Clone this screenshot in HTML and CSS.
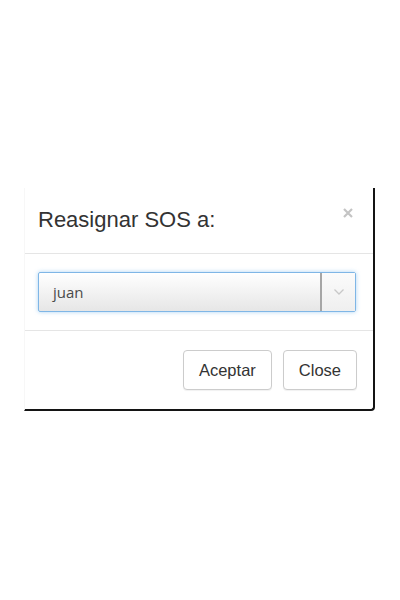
FILE: index.html
```html
<!DOCTYPE html>
<html lang="es">
<head>
<meta charset="utf-8">
<title>Reasignar SOS</title>
<link rel="stylesheet" href="styles.css">
</head>
<body>
<div class="modal">
  <div class="modal-header">
    <h4 class="modal-title">Reasignar SOS a:</h4>
    <button class="close" type="button" aria-label="Close">
      <svg width="10" height="10" viewBox="0 0 10 10"><path d="M1 1 L9 9 M9 1 L1 9" stroke="#c4c4c4" stroke-width="2.2" fill="none"/></svg>
    </button>
  </div>
  <div class="modal-body">
    <div class="select">
      <span class="select-value">juan</span>
      <span class="select-arrow">
        <svg width="12" height="8" viewBox="0 0 12 8"><path d="M1.5 1.5 L6 6 L10.5 1.5" stroke="#c8c8c8" stroke-width="1.3" fill="none"/></svg>
      </span>
    </div>
  </div>
  <div class="modal-footer">
    <button class="btn" type="button">Aceptar</button>
    <button class="btn" type="button">Close</button>
  </div>
</div>
</body>
</html>
```
FILE: styles.css
```css
html, body {
  margin: 0;
  padding: 0;
  background: #ffffff;
}

body {
  font-family: "Liberation Sans", Arial, sans-serif;
  color: #333333;
}

.modal {
  margin: 188px 0 0 24px;
  width: 348px;
  background: #ffffff;
  border-left: 1px solid #f7f7f7;
  border-right: 2px solid #141414;
  border-bottom: 2px solid #141414;
  border-radius: 0 0 4px 0;
}

.modal-header {
  display: flex;
  justify-content: space-between;
  align-items: flex-start;
  padding: 20px 20px 21px 13px;
  border-bottom: 1px solid #e5e5e5;
}

.modal-title {
  margin: 0;
  font-size: 22px;
  font-weight: normal;
  line-height: 24px;
  color: #333333;
}

.close {
  margin: 0;
  padding: 0;
  border: 0;
  background: none;
  display: block;
  line-height: 0;
}

.modal-body {
  padding: 18px 17px 18px 13px;
  border-bottom: 1px solid #e5e5e5;
}

.select {
  display: flex;
  height: 40px;
  box-sizing: border-box;
  border: 1px solid #7fb6e6;
  border-radius: 2px;
  box-shadow: 0 0 4px rgba(102, 175, 233, 0.55);
  background: linear-gradient(#ffffff, #e6e6e6);
}

.select-value {
  flex: 1;
  display: flex;
  align-items: center;
  padding-left: 14px;
  font-family: "Open Sans", "DejaVu Sans", sans-serif;
  font-size: 15px;
  color: #4a4a4a;
}

.select-arrow {
  width: 33px;
  display: flex;
  align-items: center;
  justify-content: center;
  border-left: 2px solid #a6a6a6;
  background: linear-gradient(#fbfbfb, #efefef);
}

.modal-footer {
  display: flex;
  justify-content: flex-end;
  gap: 11px;
  padding: 19px 16px 19px 0;
}

.btn {
  height: 40px;
  padding: 0 15px;
  border: 1px solid #cccccc;
  border-radius: 4px;
  background: #ffffff;
  box-shadow: 0 1px 1px rgba(0, 0, 0, 0.06);
  font-family: "Liberation Sans", Arial, sans-serif;
  font-size: 16.5px;
  color: #333333;
}
```
